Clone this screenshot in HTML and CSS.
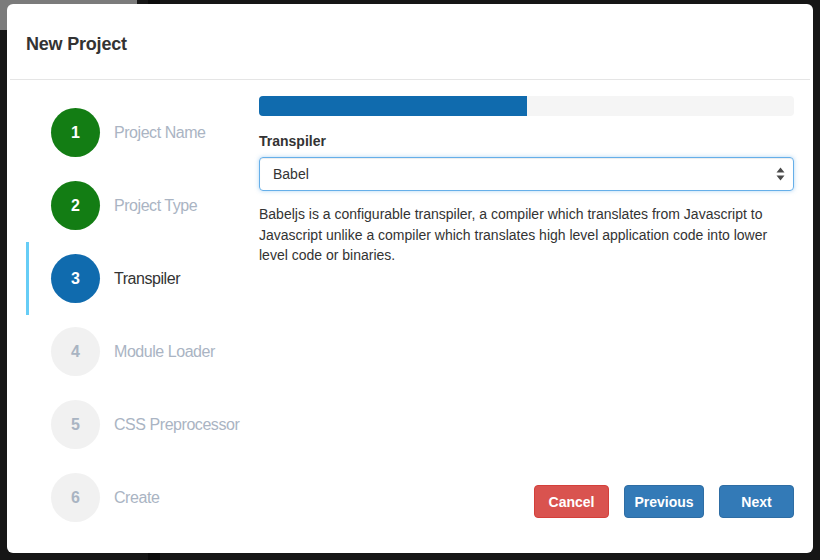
FILE: index.html
```html
<!DOCTYPE html>
<html>
<head>
<meta charset="utf-8">
<link rel="stylesheet" href="styles.css">
</head>
<body>
<div class="modal">
  <div class="modal-header">
    <h4 class="modal-title">New Project</h4>
  </div>
  <div class="modal-body">
    <ol class="steps">
      <li class="step done"><span class="num">1</span><span class="label">Project Name</span></li>
      <li class="step done"><span class="num">2</span><span class="label">Project Type</span></li>
      <li class="step active"><span class="num">3</span><span class="label">Transpiler</span></li>
      <li class="step"><span class="num">4</span><span class="label">Module Loader</span></li>
      <li class="step"><span class="num">5</span><span class="label">CSS Preprocessor</span></li>
      <li class="step"><span class="num">6</span><span class="label">Create</span></li>
    </ol>
    <div class="content">
      <div class="progress"><div class="progress-bar" style="width:50%"></div></div>
      <label class="field-label">Transpiler</label>
      <div class="select">
        <span>Babel</span>
        <svg class="arrows" width="9" height="14" viewBox="0 0 9 14"><path d="M4.5 0.5 L8.5 5.5 L0.5 5.5 Z M4.5 13.5 L8.5 8.5 L0.5 8.5 Z" fill="#4a4a4a"/></svg>
      </div>
      <p class="desc">Babeljs is a configurable transpiler, a compiler which translates from Javascript to Javascript unlike a compiler which translates high level application code into lower level code or binaries.</p>
      <div class="actions">
        <button class="btn btn-danger">Cancel</button>
        <button class="btn btn-primary prev">Previous</button>
        <button class="btn btn-primary next">Next</button>
      </div>
    </div>
  </div>
</div>
</body>
</html>
```
FILE: styles.css
```css
html, body {
  margin: 0;
  padding: 0;
  height: 100%;
}
body {
  background-color: #161616;
  background-image:
    linear-gradient(#7b7b7b, #7b7b7b),
    linear-gradient(#0b0b0b, #0b0b0b);
  background-repeat: no-repeat;
  background-position: 0 0, 148px 0;
  background-size: 137px 30px, 12px 100%;
  font-family: "Liberation Sans", Arial, sans-serif;
  color: #333;
  padding: 4px 7px 0 7px;
  box-sizing: border-box;
}
.modal {
  background: #fff;
  border-radius: 6px;
  height: 549px;
  display: flex;
  flex-direction: column;
  box-sizing: border-box;
  padding: 0 3px;
}
.modal-header {
  height: 75px;
  border-bottom: 1px solid #e5e5e5;
  display: flex;
  align-items: center;
  padding: 0 16px;
  flex: none;
}
.modal-title {
  margin: 0;
  font-size: 18px;
  font-weight: bold;
  color: #333;
  position: relative;
  top: 3px;
  letter-spacing: -0.2px;
}
.modal-body {
  flex: 1;
  display: flex;
  padding: 16px 16px 19px 16px;
  gap: 20px;
}
.steps {
  list-style: none;
  margin: 0;
  padding: 0;
  width: 213px;
  flex: none;
}
.step {
  height: 73px;
  display: flex;
  align-items: center;
  padding-left: 25px;
  border-left: 3px solid transparent;
  margin-left: 0;
}
.step.active {
  border-left-color: #66cdf6;
}
.num {
  width: 49px;
  height: 49px;
  border-radius: 50%;
  background: #f1f1f1;
  color: #a9b4c2;
  font-weight: bold;
  font-size: 16px;
  display: flex;
  align-items: center;
  justify-content: center;
  flex: none;
  margin-left: -3px;
}
.step.done .num {
  background: #137d14;
  color: #fff;
}
.step.active .num {
  background: #106bae;
  color: #fff;
}
.label {
  margin-left: 14px;
  font-size: 16px;
  color: #aab4c3;
  letter-spacing: -0.45px;
  white-space: nowrap;
}
.step.active .label {
  color: #333;
}
.content {
  flex: 1;
  display: flex;
  flex-direction: column;
  padding-bottom: 16px;
}
.progress {
  height: 20px;
  background: #f5f5f5;
  border-radius: 4px;
  overflow: hidden;
}
.progress-bar {
  height: 100%;
  background: #106bae;
}
.field-label {
  display: block;
  font-weight: bold;
  font-size: 14px;
  margin-top: 17px;
  margin-bottom: 8px;
}
.select {
  height: 34px;
  box-sizing: border-box;
  border: 1px solid #66afe9;
  border-radius: 4px;
  box-shadow: inset 0 1px 1px rgba(0,0,0,.075), 0 0 4px rgba(102,175,233,.5);
  display: flex;
  align-items: center;
  justify-content: space-between;
  padding: 0 8px 0 13px;
  font-size: 14px;
  color: #333;
}
.arrows {
  display: block;
}
.desc {
  margin: 13px 0 0 0;
  font-size: 14px;
  line-height: 20.5px;
  color: #333;
}
.actions {
  margin-top: auto;
  display: flex;
  justify-content: flex-end;
  gap: 15px;
}
.btn {
  height: 33px;
  border-radius: 4px;
  font-family: inherit;
  font-size: 14px;
  font-weight: bold;
  color: #fff;
  padding: 0;
  cursor: pointer;
}
.btn-danger {
  background: #d9534f;
  border: 1px solid #d43f3a;
  width: 75px;
}
.btn-primary {
  background: #337ab7;
  border: 1px solid #2e6da4;
}
.prev {
  width: 80px;
}
.next {
  width: 75px;
}
```
